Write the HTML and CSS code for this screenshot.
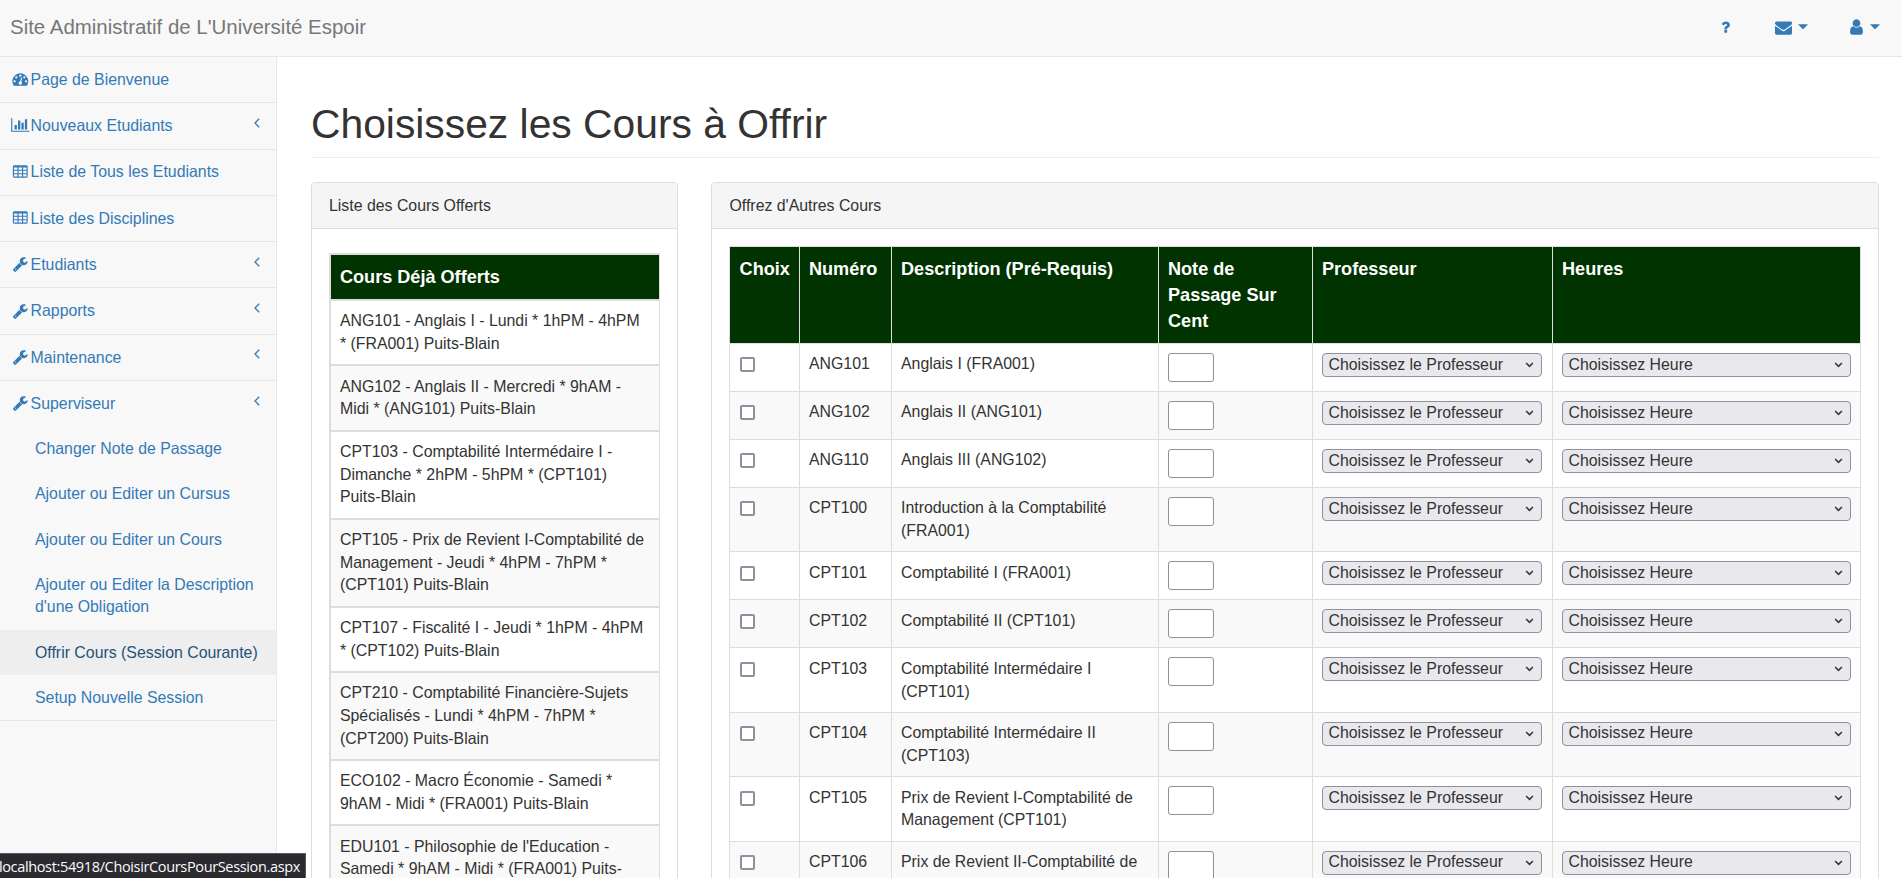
FILE: index.html
```html
<!DOCTYPE html>
<html lang="fr">
<head>
<meta charset="utf-8">
<title>Choisissez les Cours à Offrir</title>
<link rel="stylesheet" href="styles.css">
</head>
<body>
<svg class="sprite" aria-hidden="true">
  <symbol id="dash" viewBox="0 0 1792 1792"><path d="M384 1152q0-53-37.500-90.500t-90.500-37.500-90.500 37.500-37.500 90.500 37.500 90.500 90.500 37.500 90.500-37.500 37.500-90.500zm192-448q0-53-37.500-90.500t-90.500-37.500-90.500 37.500-37.500 90.500 37.500 90.500 90.500 37.500 90.500-37.500 37.500-90.500zm428 481l101-382q6-26-7.500-48.500t-38.500-29.500-48 6.500-30 39.500l-101 382q-60 5-107 43.500t-63 98.500q-20 77 20 146t117 89 146-20 89-117q16-60-6-117t-72-91zm660-33q0-53-37.500-90.500t-90.500-37.500-90.500 37.500-37.500 90.500 37.500 90.500 90.500 37.500 90.500-37.500 37.500-90.500zm-640-640q0-53-37.500-90.500t-90.500-37.500-90.500 37.500-37.500 90.500 37.500 90.500 90.500 37.500 90.500-37.500 37.500-90.500zm448 192q0-53-37.500-90.500t-90.500-37.500-90.500 37.500-37.500 90.500 37.500 90.500 90.500 37.500 90.500-37.500 37.500-90.500zm320 448q0 261-141 483-19 29-54 29h-1402q-35 0-54-29-141-221-141-483 0-182 71-348t191-286 286-191 348-71 348 71 286 191 191 286 71 348z"/></symbol>
  <symbol id="chart" viewBox="0 0 2048 1792"><path d="M640 896v512h-256v-512h256zm384-512v1024h-256v-1024h256zm1024 1152v128h-2048v-1536h128v1408h1920zm-640-896v768h-256v-768h256zm384-384v1152h-256v-1152h256z"/></symbol>
  <symbol id="table" viewBox="0 0 1792 1792"><path fill-rule="evenodd" d="M224 128h1344a160 160 0 0 1 160 160v1088a160 160 0 0 1-160 160h-1344a160 160 0 0 1-160-160v-1088a160 160 0 0 1 160-160zM192 384v256h384v-256zm512 0v256h384v-256zm512 0v256h384v-256zM192 768v256h384v-256zm512 0v256h384v-256zm512 0v256h384v-256zM192 1152v256h384v-256zm512 0v256h384v-256zm512 0v256h384v-256z"/></symbol>
  <symbol id="wrench" viewBox="0 0 1792 1792"><path d="M448 1472q0-26-19-45t-45-19-45 19-19 45 19 45 45 19 45-19 19-45zm644-420l-682 682q-37 37-90 37-52 0-91-37l-106-108q-38-36-38-90 0-53 38-91l681-681q39 98 114.500 173.500t173.500 114.500zm634-435q0 39-23 106-47 134-164.500 217.500t-258.500 83.500q-185 0-316.500-131.500t-131.500-316.500 131.500-316.500 316.500-131.500q58 0 121.500 16.500t107.500 46.500q16 11 16 28t-16 28l-293 169v224l193 107q5-3 79-48.500t135.500-81 70.500-35.500q15 0 23.500 10t8.500 25z"/></symbol>
  <symbol id="mail" viewBox="0 0 1792 1792"><path d="M1792 710v794q0 66-47 113t-113 47h-1472q-66 0-113-47t-47-113v-794q44 49 101 87 362 246 497 345 57 42 92.500 65.500t94.500 48 110 24.500h2q51 0 110-24.500t94.500-48 92.500-65.500q170-123 498-345 57-39 100-87zm0-294q0 79-49 151t-122 123q-376 261-468 325-10 7-42.500 31t-54 38.500-52 32.500-57.500 27-50 9h-2q-23 0-50-9t-57.500-27-52-32.500-54-38.500-42.500-31q-91-64-262-182.500t-205-142.500q-62-42-117-115.500t-55-136.500q0-78 41.500-130t118.500-52h1472q65 0 112.500 47t47.500 113z"/></symbol>
  <symbol id="user" viewBox="256 0 1280 1792"><path d="M1536 1399q0 109-62.500 187t-150.500 78h-854q-88 0-150.500-78t-62.500-187q0-85 8.500-160.500t31.500-152 58.500-131 94-89 134.500-34.500q131 128 313 128t313-128q76 0 134.500 34.500t94 89 58.500 131 31.500 152 8.500 160.500zm-256-887q0 159-112.500 271.500t-271.500 112.500-271.500-112.500-112.500-271.500 112.500-271.500 271.500-112.500 271.500 112.500 112.500 271.500z"/></symbol>
  <symbol id="help" viewBox="388 0 1024 1792"><path d="M1088 1256v240q0 16-12 28t-28 12h-240q-16 0-28-12t-12-28v-240q0-16 12-28t28-12h240q16 0 28 12t12 28zm316-600q0 54-15.500 101t-35 76.500-55 59.500-57.500 43.500-61 35.500q-41 23-68.500 65t-27.500 67q0 17-12 32.500t-28 15.500h-240q-15 0-25.500-18.500t-10.500-37.500v-45q0-83 65-156.500t143-108.500q59-27 84-56t25-76q0-42-46.500-74t-107.500-32q-65 0-108 29-35 25-107 115-13 16-31 16-12 0-25-8l-164-125q-13-10-15.500-25t5.500-28q160-266 464-266 80 0 161 31t146 83 106 127.500 41 158.500z"/></symbol>
  <symbol id="caret" viewBox="0 0 10 6"><path d="M.6.3h8.800q.6 0 .2.500l-4.200 4.300q-.4.400-.8 0L.4.800Q0 .3.600.3z"/></symbol>
  <symbol id="left" viewBox="0 0 6 10"><path d="M5.200.7L1 5l4.200 4.300" fill="none" stroke="currentColor" stroke-width="1.300"/></symbol>
  <symbol id="down" viewBox="0 0 10 6"><path d="M1.200.8L5 4.500 8.800.8" fill="none" stroke="currentColor" stroke-width="1.700"/></symbol>
</svg>

<header class="navbar">
  <a class="brand">Site Administratif de L'Université Espoir</a>
  <nav class="tools">
    <a class="tool tool-help"><svg class="i-help"><use href="#help"/></svg></a>
    <a class="tool tool-mail"><svg class="i-mail"><use href="#mail"/></svg><svg class="i-caret"><use href="#caret"/></svg></a>
    <a class="tool tool-user"><svg class="i-user"><use href="#user"/></svg><svg class="i-caret"><use href="#caret"/></svg></a>
  </nav>
</header>

<div class="layout">
  <aside class="sidebar">
    <ul class="menu">
      <li><a><svg class="ico"><use href="#dash"/></svg>Page de Bienvenue</a></li>
      <li><a><svg class="ico"><use href="#chart"/></svg>Nouveaux Etudiants<svg class="arrow"><use href="#left"/></svg></a></li>
      <li><a><svg class="ico"><use href="#table"/></svg>Liste de Tous les Etudiants</a></li>
      <li><a><svg class="ico"><use href="#table"/></svg>Liste des Disciplines</a></li>
      <li><a><svg class="ico"><use href="#wrench"/></svg>Etudiants<svg class="arrow"><use href="#left"/></svg></a></li>
      <li><a><svg class="ico"><use href="#wrench"/></svg>Rapports<svg class="arrow"><use href="#left"/></svg></a></li>
      <li><a><svg class="ico"><use href="#wrench"/></svg>Maintenance<svg class="arrow"><use href="#left"/></svg></a></li>
      <li><a><svg class="ico"><use href="#wrench"/></svg>Superviseur<svg class="arrow"><use href="#left"/></svg></a>
        <ul class="submenu">
          <li><a>Changer Note de Passage</a></li>
          <li><a>Ajouter ou Editer un Cursus</a></li>
          <li><a>Ajouter ou Editer un Cours</a></li>
          <li><a>Ajouter ou Editer la Description d'une Obligation</a></li>
          <li><a class="current">Offrir Cours (Session Courante)</a></li>
          <li><a>Setup Nouvelle Session</a></li>
        </ul>
      </li>
    </ul>
  </aside>

  <main class="page">
    <h1>Choisissez les Cours à Offrir</h1>
    <div class="panels">
      <section class="panel">
        <div class="panel-heading">Liste des Cours Offerts</div>
        <div class="panel-body">
          <div class="offered">
            <div class="offered-head">Cours Déjà Offerts</div>
            <div class="offered-row">ANG101 - Anglais I - Lundi * 1hPM - 4hPM * (FRA001) Puits-Blain</div>
            <div class="offered-row">ANG102 - Anglais II - Mercredi * 9hAM - Midi * (ANG101) Puits-Blain</div>
            <div class="offered-row">CPT103 - Comptabilité Intermédaire I - Dimanche * 2hPM - 5hPM * (CPT101) Puits-Blain</div>
            <div class="offered-row">CPT105 - Prix de Revient I-Comptabilité de Management - Jeudi * 4hPM - 7hPM * (CPT101) Puits-Blain</div>
            <div class="offered-row">CPT107 - Fiscalité I - Jeudi * 1hPM - 4hPM * (CPT102) Puits-Blain</div>
            <div class="offered-row">CPT210 - Comptabilité Financière-Sujets Spécialisés - Lundi * 4hPM - 7hPM * (CPT200) Puits-Blain</div>
            <div class="offered-row">ECO102 - Macro Économie - Samedi * 9hAM - Midi * (FRA001) Puits-Blain</div>
            <div class="offered-row">EDU101 - Philosophie de l'Education - Samedi * 9hAM - Midi * (FRA001) Puits-Blain</div>
          </div>
        </div>
      </section>

      <section class="panel panel-wide">
        <div class="panel-heading">Offrez d'Autres Cours</div>
        <div class="panel-body">
          <div class="courses">
            <div class="row head"><div>Choix</div><div>Numéro</div><div>Description (Pré-Requis)</div><div>Note de Passage Sur Cent</div><div>Professeur</div><div>Heures</div></div>
            <div class="row"><div><input type="checkbox"></div><div>ANG101</div><div>Anglais I (FRA001)</div><div><input type="text"></div><div><span class="select">Choisissez le Professeur<svg><use href="#down"/></svg></span></div><div><span class="select">Choisissez Heure<svg><use href="#down"/></svg></span></div></div>
            <div class="row"><div><input type="checkbox"></div><div>ANG102</div><div>Anglais II (ANG101)</div><div><input type="text"></div><div><span class="select">Choisissez le Professeur<svg><use href="#down"/></svg></span></div><div><span class="select">Choisissez Heure<svg><use href="#down"/></svg></span></div></div>
            <div class="row"><div><input type="checkbox"></div><div>ANG110</div><div>Anglais III (ANG102)</div><div><input type="text"></div><div><span class="select">Choisissez le Professeur<svg><use href="#down"/></svg></span></div><div><span class="select">Choisissez Heure<svg><use href="#down"/></svg></span></div></div>
            <div class="row"><div><input type="checkbox"></div><div>CPT100</div><div>Introduction à la Comptabilité (FRA001)</div><div><input type="text"></div><div><span class="select">Choisissez le Professeur<svg><use href="#down"/></svg></span></div><div><span class="select">Choisissez Heure<svg><use href="#down"/></svg></span></div></div>
            <div class="row"><div><input type="checkbox"></div><div>CPT101</div><div>Comptabilité I (FRA001)</div><div><input type="text"></div><div><span class="select">Choisissez le Professeur<svg><use href="#down"/></svg></span></div><div><span class="select">Choisissez Heure<svg><use href="#down"/></svg></span></div></div>
            <div class="row"><div><input type="checkbox"></div><div>CPT102</div><div>Comptabilité II (CPT101)</div><div><input type="text"></div><div><span class="select">Choisissez le Professeur<svg><use href="#down"/></svg></span></div><div><span class="select">Choisissez Heure<svg><use href="#down"/></svg></span></div></div>
            <div class="row"><div><input type="checkbox"></div><div>CPT103</div><div>Comptabilité Intermédaire I (CPT101)</div><div><input type="text"></div><div><span class="select">Choisissez le Professeur<svg><use href="#down"/></svg></span></div><div><span class="select">Choisissez Heure<svg><use href="#down"/></svg></span></div></div>
            <div class="row"><div><input type="checkbox"></div><div>CPT104</div><div>Comptabilité Intermédaire II (CPT103)</div><div><input type="text"></div><div><span class="select">Choisissez le Professeur<svg><use href="#down"/></svg></span></div><div><span class="select">Choisissez Heure<svg><use href="#down"/></svg></span></div></div>
            <div class="row"><div><input type="checkbox"></div><div>CPT105</div><div>Prix de Revient I-Comptabilité de Management (CPT101)</div><div><input type="text"></div><div><span class="select">Choisissez le Professeur<svg><use href="#down"/></svg></span></div><div><span class="select">Choisissez Heure<svg><use href="#down"/></svg></span></div></div>
            <div class="row"><div><input type="checkbox"></div><div>CPT106</div><div>Prix de Revient II-Comptabilité de</div><div><input type="text"></div><div><span class="select">Choisissez le Professeur<svg><use href="#down"/></svg></span></div><div><span class="select">Choisissez Heure<svg><use href="#down"/></svg></span></div></div>
          </div>
        </div>
      </section>
    </div>
  </main>
</div>

<div class="status"><span>localhost:54918/ChoisirCoursPourSession.aspx</span></div>
</body>
</html>
```
FILE: styles.css
```css
* { box-sizing: border-box; }

body {
  margin: 0;
  height: 878px;
  overflow: hidden;
  display: flex;
  flex-direction: column;
  background: #f8f8f8;
  color: #333;
  font: 15.860px/22.700px "Liberation Sans", Arial, sans-serif;
}

svg { fill: currentColor; }
.sprite { display: none; }

/* Top bar */
.navbar {
  flex: none;
  display: flex;
  justify-content: space-between;
  height: 57px;
  border-bottom: 1px solid #e7e7e7;
}
.brand { padding: 15px 0 0 10px; font-size: 20.450px; line-height: 24px; color: #777; }
.tools { display: flex; align-items: center; padding: 0 22.500px 2px 0; color: #337ab7; }
.tool { display: flex; align-items: center; }
.tool svg { display: block; }
.tool-mail { margin-left: 45.500px; }
.tool-user { margin-left: 41.500px; }
.i-help { width: 9px; height: 16px; }
.i-mail { width: 17px; height: 17px; margin-right: 6px; }
.i-user { width: 13px; height: 18px; margin-right: 7px; }
.i-caret { width: 10px; height: 6px; }

.layout { flex: 1; display: flex; min-height: 0; }

/* Side menu */
.sidebar { flex: none; width: 277px; border-right: 1px solid #e7e7e7; color: #337ab7; }
.sidebar ul { list-style: none; margin: 0; padding: 0; }
.menu > li { border-bottom: 1px solid #e7e7e7; }
.menu > li > a { display: flex; align-items: center; height: 45.300px; padding: 1px 16px 0 10px; }
.ico { flex: none; width: 20.600px; height: 16px; margin-top: -2px; }
.arrow { width: 6px; height: 10px; margin: -7px 0 0 auto; }
.submenu a { display: block; padding: 11.750px 0 10.750px 35px; }
.submenu .current { background: #eee; color: #23527c; }

/* Content */
.page { flex: 1; min-width: 0; padding: 0 23px 0 34px; background: #fff; overflow: hidden; }
h1 {
  height: 101px;
  margin: 0 0 24px;
  padding-top: 45px;
  border-bottom: 1px solid #eee;
  font-size: 40.800px;
  line-height: 45px;
  font-weight: 400;
}
.panels { display: grid; grid-template-columns: 367px 1fr; gap: 33px; align-items: start; }
.panel { border: 1px solid #ddd; border-radius: 4px; background: #fff; }
.panel-heading {
  height: 46px;
  padding: 12px 17px 10px;
  border-bottom: 1px solid #ddd;
  border-radius: 3px 3px 0 0;
  background: #f5f5f5;
}
.panel-wide .panel-heading { padding-left: 17.500px; }
.panel-body { padding: 17px; }

.offered { margin-top: 7px; border: solid #ddd; border-width: 2px 1px 0 2px; }
.offered > div { padding: 9.450px 8.950px 8.450px; border-bottom: 2px solid #ddd; }
.offered-row:nth-child(odd) { background: #f9f9f9; }
.offered .offered-head {
  padding: 9px;
  background: #030;
  color: #fff;
  font-size: 18.100px;
  line-height: 26px;
  font-weight: 700;
}

.courses { border: solid #ddd; border-width: 1px 0 0 1px; }
.row { display: grid; grid-template-columns: 70px 92px 267px 154px 240px 1fr; }
.row > div { padding: 9.450px 9px 8.550px; border: solid #ddd; border-width: 0 1px 1px 0; }
.row > div:nth-child(n+4) { padding: 9px; }
.row:nth-child(odd) > div { background: #f9f9f9; }
.row.head > div {
  background: #030;
  color: #fff;
  padding: 9px;
  font-size: 18.100px;
  line-height: 26px;
  font-weight: 700;
}
.row.head > div:first-child { padding: 9px 0 9px 9.600px; }
.row > div:nth-child(5) { padding-right: 10px; }
.row input { display: block; margin: 0; appearance: none; background: #fff; border: 1px solid #8f8f9d; }
.row input[type="text"] { width: 46px; height: 29px; border-radius: 3px; }
.row input[type="checkbox"] { width: 15px; height: 15px; margin: 4px 0 0 1px; border-width: 2px; border-radius: 2px; }
.select {
  display: flex;
  align-items: center;
  justify-content: space-between;
  height: 24px;
  padding: 0 7px 0 5.500px;
  border: 1px solid #8f8f9d;
  border-radius: 4px;
  background: #e9e9ed;
}
.select svg { width: 9px; height: 6px; }

/* Link address shown by the browser */
.status {
  position: absolute;
  left: 0;
  bottom: 0;
  display: flex;
  justify-content: flex-end;
  width: 306px;
  height: 25px;
  padding-right: 5px;
  overflow: hidden;
  border: solid #5b5b5e;
  border-width: 1px 1px 0 0;
  background: #2b2a2e;
  color: #fbfbfe;
  font: 14.500px/26px "Open Sans", "Noto Sans", sans-serif;
  letter-spacing: -0.350px;
  white-space: nowrap;
}
```
